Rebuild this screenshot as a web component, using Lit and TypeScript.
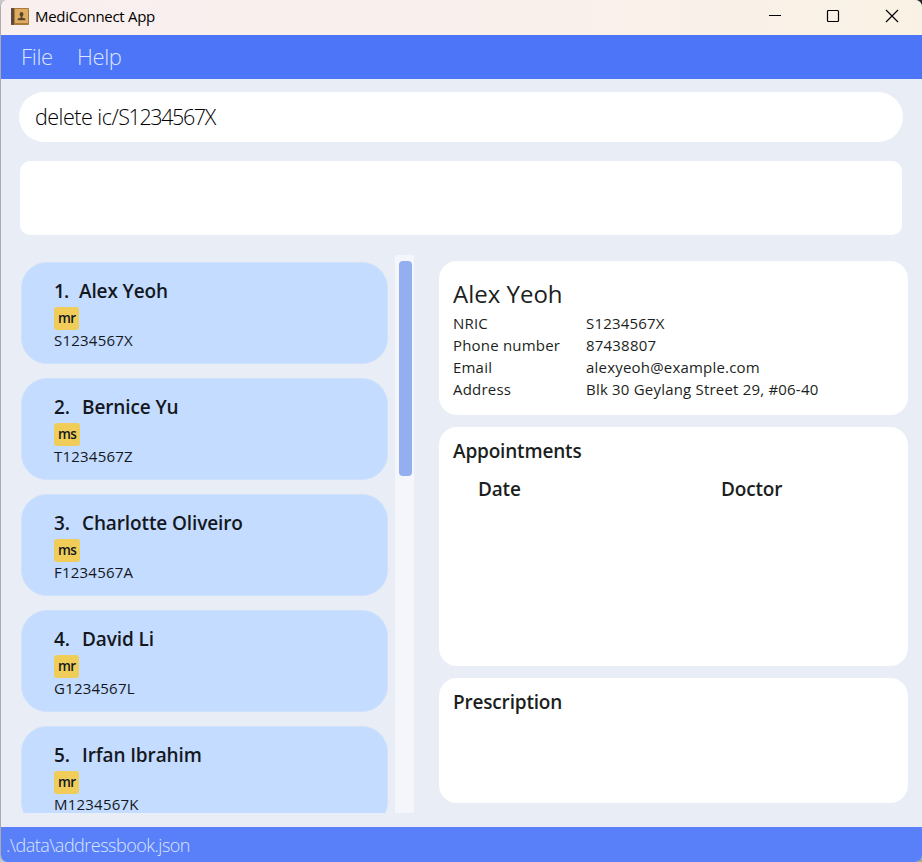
import { LitElement, html, css } from "lit";
import { customElement, property } from "lit/decorators.js";
import { classMap } from "lit/directives/class-map.js";

interface Patient {
  name: string;
  tag: string;
  nric: string;
}

const PATIENTS: Patient[] = [
  { name: "Alex Yeoh", tag: "mr", nric: "S1234567X" },
  { name: "Bernice Yu", tag: "ms", nric: "T1234567Z" },
  { name: "Charlotte Oliveiro", tag: "ms", nric: "F1234567A" },
  { name: "David Li", tag: "mr", nric: "G1234567L" },
  { name: "Irfan Ibrahim", tag: "mr", nric: "M1234567K" },
];

const DETAILS: [string, string][] = [
  ["NRIC", "S1234567X"],
  ["Phone number", "87438807"],
  ["Email", "alexyeoh@example.com"],
  ["Address", "Blk 30 Geylang Street 29, #06-40"],
];

@customElement("patient-card")
class PatientCard extends LitElement {
  @property({ type: Number }) index = 0;
  @property({ attribute: false }) patient!: Patient;

  static styles = css`
    :host {
      display: block;
      box-sizing: border-box;
      flex: none;
      height: 102px;
      padding: 15px 0 0 32px;
      border: 1px solid #cfe1fb;
      border-radius: 26px;
      background: #c4dcff;
      color: #14181e;
    }
    .name {
      display: flex;
      gap: 12px;
      font-size: 19px;
      font-weight: 600;
      line-height: 26px;
      letter-spacing: -0.12px;
      white-space: nowrap;
    }
    .number {
      width: 16px;
    }
    .number.narrow {
      width: 13px;
      letter-spacing: -1px;
    }
    .tag {
      display: block;
      width: fit-content;
      margin-top: 3px;
      height: 23px;
      box-sizing: border-box;
      padding: 0 4px;
      border-radius: 3px;
      background: #efcd58;
      font-size: 13.5px;
      font-weight: 600;
      line-height: 22px;
      letter-spacing: -0.7px;
    }
    .nric {
      margin-top: -1px;
      font-size: 15px;
      line-height: 22px;
      letter-spacing: 0.22px;
    }
  `;

  render() {
    return html`
      <div class="name">
        <span class=${classMap({ number: true, narrow: this.index === 1 })}>${this.index}.</span>
        <span>${this.patient.name}</span>
      </div>
      <span class="tag">${this.patient.tag}</span>
      <div class="nric">${this.patient.nric}</div>
    `;
  }
}

@customElement("app-root")
class AppRoot extends LitElement {
  static styles = css`
    :host {
      display: block;
      width: 922px;
      height: 862px;
      background: linear-gradient(90deg, #c9c9cb 50%, transparent 50%),
        linear-gradient(180deg, #26262a 50%, #a5a58c 50%);
      color: #1c1f22;
      font-family: "Open Sans", "Noto Sans", sans-serif;
    }
    .window {
      display: flex;
      flex-direction: column;
      box-sizing: border-box;
      height: 862px;
      overflow: hidden;
      border-left: 1px solid #acacb0;
      border-radius: 7px;
      background: #e8edf6;
    }
    .titlebar {
      display: flex;
      align-items: center;
      flex: none;
      height: 35px;
      padding: 0 23px 3px 10px;
      box-sizing: border-box;
      background: linear-gradient(90deg, #f9efef 0%, #f9f0ec 60%, #f9f2e4 100%);
      color: #000;
    }
    .title {
      flex: 1;
      margin-left: 6px;
      font-size: 15px;
      letter-spacing: -0.3px;
    }
    .controls {
      display: flex;
      gap: 44px;
    }
    .close {
      margin-left: 1px;
    }
    .menu {
      display: flex;
      flex: none;
      gap: 24px;
      height: 44px;
      padding-left: 20px;
      background: #4c75f8;
      color: #dce5ff;
      font-size: 22px;
      font-weight: 300;
      line-height: 42px;
      letter-spacing: -0.3px;
    }
    .command {
      flex: none;
      height: 50px;
      box-sizing: border-box;
      margin: 13px 19px 0 18px;
      padding-left: 16px;
      border-radius: 25px;
      background: #fff;
      color: #000;
      font-size: 21.5px;
      font-weight: 300;
      line-height: 49px;
      letter-spacing: -0.5px;
    }
    .value {
      letter-spacing: -1.4px;
    }
    .result {
      flex: none;
      height: 74px;
      margin: 19px 20px 0 19px;
      border-radius: 10px;
      background: #fff;
    }
    .main {
      display: flex;
      flex: none;
      height: 558px;
      margin-top: 20px;
      padding-left: 20px;
    }
    .list {
      display: flex;
      flex-direction: column;
      gap: 14px;
      width: 367px;
      box-sizing: border-box;
      padding-top: 7px;
      overflow: hidden;
    }
    .track {
      width: 19px;
      margin-left: 7px;
      padding: 6px 2px 0 4px;
      box-sizing: border-box;
      background: #f4f6fb;
    }
    .thumb {
      width: 13px;
      height: 215px;
      border-radius: 4px;
      background: #94aff0;
    }
    .panels {
      display: flex;
      flex-direction: column;
      gap: 12px;
      width: 469px;
      margin-left: 25px;
      padding-top: 6px;
    }
    .panel {
      box-sizing: border-box;
      padding: 0 14px;
      border-radius: 18px;
      background: #fff;
    }
    .person {
      height: 154px;
      padding-top: 15px;
    }
    .appointments {
      height: 239px;
      padding-top: 11px;
    }
    .prescription {
      height: 125px;
      padding-top: 11px;
    }
    .heading {
      font-size: 24px;
      line-height: 36px;
    }
    .fields {
      display: grid;
      grid-template-columns: 133px 1fr;
      font-size: 15px;
      line-height: 22px;
      letter-spacing: 0.2px;
    }
    .subheading {
      font-size: 19px;
      font-weight: 600;
      line-height: 26px;
      letter-spacing: -0.18px;
    }
    .columns {
      display: grid;
      grid-template-columns: 243px 1fr;
      padding: 12px 0 0 25px;
    }
    .status {
      flex: none;
      height: 35px;
      margin-top: 14px;
      padding-left: 5px;
      background: #5980f8;
      color: #dce5ff;
      font-size: 18px;
      font-weight: 300;
      line-height: 37px;
      letter-spacing: -0.5px;
    }
  `;

  render() {
    return html`
      <div class="window">
        <div class="titlebar">
          <svg width="18" height="17" viewBox="0 0 18 17">
            <rect width="18" height="17" rx="1" fill="#a77a3b" />
            <rect width="3" height="17" rx="1" fill="#5e4a3a" />
            <rect x="4" y="1" width="13" height="14" fill="#e0ad60" />
            <ellipse cx="10.5" cy="6.300" rx="1.900" ry="2.400" fill="#56462f" />
            <path d="M9.700 8h1.600v1.800l3 .6v1.900h-7.600v-1.900l3-.6z" fill="#56462f" />
          </svg>
          <span class="title">MediConnect App</span>
          <div class="controls">
            <svg width="14" height="14" viewBox="0 0 14 14"><path d="M1 6.500h12" stroke="#000" /></svg>
            <svg width="14" height="14" viewBox="0 0 14 14">
              <rect x="1.500" y="1.500" width="11" height="11" rx="1" fill="none" stroke="#000" stroke-width="1.200" />
            </svg>
            <svg class="close" width="14" height="14" viewBox="0 0 14 14">
              <path d="M1 1l12 12M13 1L1 13" stroke="#000" stroke-width="1.200" />
            </svg>
          </div>
        </div>
        <div class="menu"><span>File</span><span>Help</span></div>
        <div class="command">delete ic/<span class="value">S1234567X</span></div>
        <div class="result"></div>
        <div class="main">
          <div class="list">
            ${PATIENTS.map((p, i) => html`<patient-card .index=${i + 1} .patient=${p}></patient-card>`)}
          </div>
          <div class="track"><div class="thumb"></div></div>
          <div class="panels">
            <div class="panel person">
              <div class="heading">Alex Yeoh</div>
              <div class="fields">${DETAILS.map(([k, v]) => html`<span>${k}</span><span>${v}</span>`)}</div>
            </div>
            <div class="panel appointments">
              <div class="subheading">Appointments</div>
              <div class="columns subheading"><span>Date</span><span>Doctor</span></div>
            </div>
            <div class="panel prescription">
              <div class="subheading">Prescription</div>
            </div>
          </div>
        </div>
        <div class="status">.\\data\\addressbook.json</div>
      </div>
    `;
  }
}
